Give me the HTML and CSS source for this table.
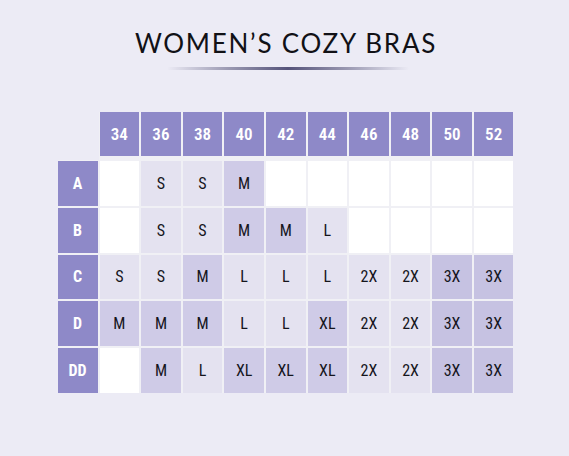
FILE: index.html
```html
<!DOCTYPE html>
<html>
<head>
<meta charset="utf-8">
<link rel="stylesheet" href="styles.css">
</head>
<body>
<div class="page">
  <h1 class="title">WOMEN’S COZY BRAS</h1>
  <div class="rule"></div>
  <div class="chart">
    <div class="corner"></div>
    <div class="hd">34</div><div class="hd">36</div><div class="hd">38</div><div class="hd">40</div><div class="hd">42</div><div class="hd">44</div><div class="hd">46</div><div class="hd">48</div><div class="hd">50</div><div class="hd">52</div>

    <div class="lbl">A</div>
    <div class="c w"></div><div class="c l">S</div><div class="c l">S</div><div class="c m">M</div><div class="c w"></div><div class="c w"></div><div class="c w"></div><div class="c w"></div><div class="c w"></div><div class="c w"></div>

    <div class="lbl">B</div>
    <div class="c w"></div><div class="c l">S</div><div class="c l">S</div><div class="c m">M</div><div class="c m">M</div><div class="c l">L</div><div class="c w"></div><div class="c w"></div><div class="c w"></div><div class="c w"></div>

    <div class="lbl">C</div>
    <div class="c l">S</div><div class="c l">S</div><div class="c m">M</div><div class="c l">L</div><div class="c l">L</div><div class="c l">L</div><div class="c l">2X</div><div class="c l">2X</div><div class="c d">3X</div><div class="c d">3X</div>

    <div class="lbl">D</div>
    <div class="c m">M</div><div class="c m">M</div><div class="c m">M</div><div class="c l">L</div><div class="c l">L</div><div class="c m">XL</div><div class="c l">2X</div><div class="c l">2X</div><div class="c d">3X</div><div class="c d">3X</div>

    <div class="lbl">DD</div>
    <div class="c w"></div><div class="c m">M</div><div class="c l">L</div><div class="c m">XL</div><div class="c m">XL</div><div class="c m">XL</div><div class="c l">2X</div><div class="c l">2X</div><div class="c d">3X</div><div class="c d">3X</div>
  </div>
</div>
</body>
</html>
```
FILE: styles.css
```css
html, body {
  margin: 0;
  padding: 0;
  background: #ecebf5;
}
.page {
  width: 569px;
  height: 456px;
  display: flex;
  flex-direction: column;
  align-items: center;
}
.title {
  margin: 27px 0 0 0;
  font-family: "Lato", "DejaVu Sans", sans-serif;
  font-weight: 400;
  font-size: 26px;
  line-height: 32px;
  letter-spacing: 1.75px;
  color: #111116;
  padding-left: 3px;
}
.rule {
  margin-top: 8px;
  margin-left: 6px;
  width: 242px;
  height: 3px;
  background: linear-gradient(90deg, rgba(90,88,125,0) 0%, rgba(90,88,125,0.55) 25%, #55537a 50%, rgba(90,88,125,0.55) 75%, rgba(90,88,125,0) 100%);
  border-radius: 2px;
}
.chart {
  margin-top: 42px;
  margin-left: 2px;
  display: grid;
  grid-template-columns: 40px repeat(10, 39.6px);
  grid-template-rows: 47px repeat(5, 44.8px);
  column-gap: 2px;
  row-gap: 2px;
  background: linear-gradient(#ecebf5, #ecebf5) 0 0 / 41px 48px no-repeat, #f0f0f5;
  font-family: "Liberation Sans Narrow", "Roboto Condensed", "Roboto", sans-serif;
}
.corner {
  background: #ecebf5;
}
.hd {
  background: #8e89c8;
  color: #ffffff;
  font-size: 17px;
  font-weight: 600;
  display: flex;
  align-items: center;
  justify-content: center;
  align-self: start;
  height: 44px;
}
.lbl {
  background: #8e89c8;
  color: #ffffff;
  font-size: 16px;
  font-weight: 700;
  display: flex;
  align-items: center;
  justify-content: center;
}
.c {
  display: flex;
  align-items: center;
  justify-content: center;
  font-size: 16px;
  color: #15151c;
}
.w { background: #ffffff; }
.l { background: #e4e2f0; }
.m { background: #cfcbe7; }
.d { background: #c6c2e2; }
```
